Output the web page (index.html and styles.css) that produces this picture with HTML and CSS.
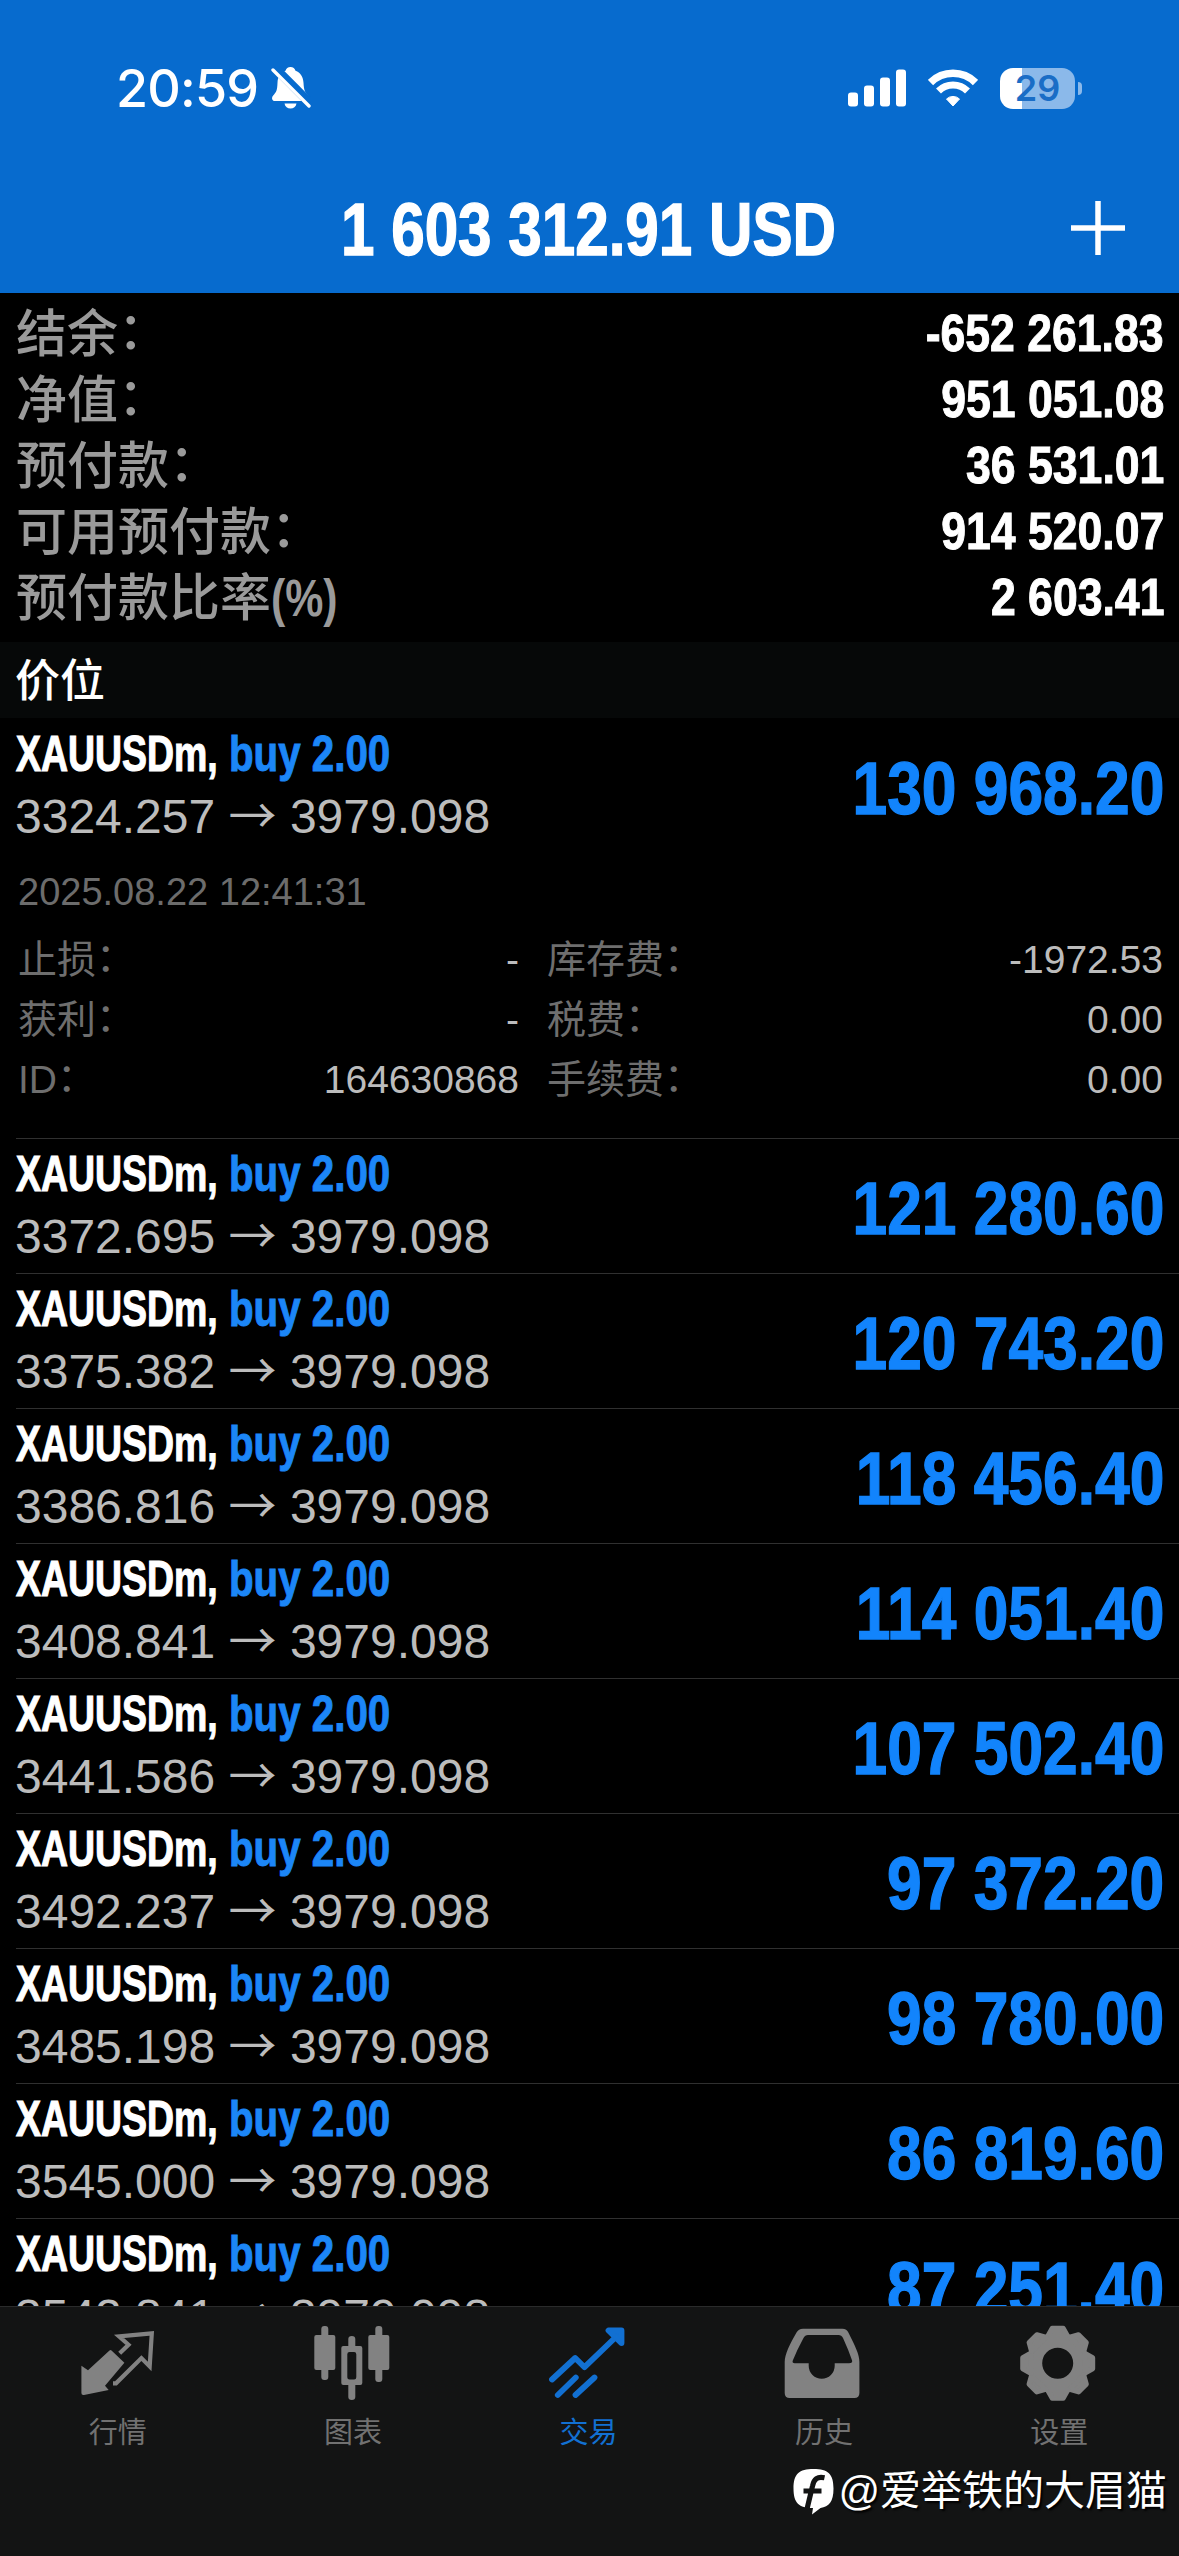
FILE: index.html
```
<!DOCTYPE html>
<html lang="zh-CN">
<head>
<meta charset="utf-8">
<title>交易</title>
<link rel="stylesheet" href="styles.css">
</head>
<body>
<div class="app">
  <header class="header">
    <div class="status">
      <div class="status-left">
        <span class="clock">20:59</span>
        <svg class="bell" width="40" height="44" viewBox="0 0 40 44">
          <path d="M19.500 1c2.600 0 4.400 1.600 5 3.800 5 1.800 7.600 6 8 12 .4 7.400 1.500 9.800 4.400 12.600 1.800 1.800 1.900 5.600-1.400 5.600H4c-3.300 0-3.700-3.600-1.800-5.600 3.200-3.200 4-5.200 4.300-12.600.3-6 3-10.200 8-12 .6-2.200 2.400-3.800 5-3.800z" fill="#fff"/>
          <path d="M13.500 37.500h12c-.6 3.200-3 5-6 5s-5.400-1.800-6-5z" fill="#fff"/>
          <path d="M3 1l36 36" stroke="#076bce" stroke-width="9"/>
          <path d="M2 4l36 36" stroke="#fff" stroke-width="3.400" stroke-linecap="round"/>
        </svg>
      </div>
      <div class="status-right">
        <svg width="58" height="38" viewBox="0 0 58 38" fill="#fff">
          <rect x="0" y="23.500" width="10" height="14" rx="3"/>
          <rect x="16" y="16.500" width="10" height="21" rx="3"/>
          <rect x="32" y="8.500" width="10" height="29" rx="3"/>
          <rect x="48" y="0.500" width="10" height="37" rx="3"/>
        </svg>
        <svg width="50" height="38" viewBox="0 0 50 38" fill="none" stroke="#fff">
          <path d="M2.500 13.500a32 32 0 0 1 45 0" stroke-width="7.500"/>
          <path d="M10.500 22a20.500 20.500 0 0 1 29 0" stroke-width="7"/>
          <path d="M25 37l-6.500-7a9.500 9.500 0 0 1 13 0z" fill="#fff" stroke-width="1"/>
        </svg>
        <div class="battery"><div class="battery-body">29</div><div class="battery-nub"></div></div>
      </div>
    </div>
    <div class="titlebar">
      <h1 class="title">1 603 312.91 USD</h1>
      <svg class="plus" width="56" height="56" viewBox="0 0 56 56"><path d="M28 1v54M1 28h54" stroke="#fff" stroke-width="5.500"/></svg>
    </div>
  </header>

  <section class="summary">
    <div class="sum-row"><span class="sum-label">结余<i>：</i></span><span class="sum-value">-652 261.83</span></div>
    <div class="sum-row"><span class="sum-label">净值<i>：</i></span><span class="sum-value">951 051.08</span></div>
    <div class="sum-row"><span class="sum-label">预付款<i>：</i></span><span class="sum-value">36 531.01</span></div>
    <div class="sum-row"><span class="sum-label">可用预付款<i>：</i></span><span class="sum-value">914 520.07</span></div>
    <div class="sum-row"><span class="sum-label">预付款比率<b class="pct">(%)</b></span><span class="sum-value">2 603.41</span></div>
  </section>

  <h2 class="section">价位</h2>

  <main class="list">
    <article class="position">
      <div class="pos-left"><div class="pos-name"><span class="symbol">XAUUSDm,</span><span class="side">buy 2.00</span></div><div class="pos-price">3324.257 <span class="arrow">→</span> 3979.098</div></div>
      <div class="profit">130 968.20</div>
    </article>
    <div class="details">
      <div class="date">2025.08.22 12:41:31</div>
      <div class="grid">
        <div class="cell"><span class="k">止损<i>：</i></span><span class="v">-</span></div>
        <div class="cell"><span class="k">库存费<i>：</i></span><span class="v">-1972.53</span></div>
        <div class="cell"><span class="k">获利<i>：</i></span><span class="v">-</span></div>
        <div class="cell"><span class="k">税费<i>：</i></span><span class="v">0.00</span></div>
        <div class="cell"><span class="k">ID<i>：</i></span><span class="v">164630868</span></div>
        <div class="cell"><span class="k">手续费<i>：</i></span><span class="v">0.00</span></div>
      </div>
    </div>
    <article class="position">
      <div class="pos-left"><div class="pos-name"><span class="symbol">XAUUSDm,</span><span class="side">buy 2.00</span></div><div class="pos-price">3372.695 <span class="arrow">→</span> 3979.098</div></div>
      <div class="profit">121 280.60</div>
    </article>
    <article class="position">
      <div class="pos-left"><div class="pos-name"><span class="symbol">XAUUSDm,</span><span class="side">buy 2.00</span></div><div class="pos-price">3375.382 <span class="arrow">→</span> 3979.098</div></div>
      <div class="profit">120 743.20</div>
    </article>
    <article class="position">
      <div class="pos-left"><div class="pos-name"><span class="symbol">XAUUSDm,</span><span class="side">buy 2.00</span></div><div class="pos-price">3386.816 <span class="arrow">→</span> 3979.098</div></div>
      <div class="profit">118 456.40</div>
    </article>
    <article class="position">
      <div class="pos-left"><div class="pos-name"><span class="symbol">XAUUSDm,</span><span class="side">buy 2.00</span></div><div class="pos-price">3408.841 <span class="arrow">→</span> 3979.098</div></div>
      <div class="profit">114 051.40</div>
    </article>
    <article class="position">
      <div class="pos-left"><div class="pos-name"><span class="symbol">XAUUSDm,</span><span class="side">buy 2.00</span></div><div class="pos-price">3441.586 <span class="arrow">→</span> 3979.098</div></div>
      <div class="profit">107 502.40</div>
    </article>
    <article class="position">
      <div class="pos-left"><div class="pos-name"><span class="symbol">XAUUSDm,</span><span class="side">buy 2.00</span></div><div class="pos-price">3492.237 <span class="arrow">→</span> 3979.098</div></div>
      <div class="profit">97 372.20</div>
    </article>
    <article class="position">
      <div class="pos-left"><div class="pos-name"><span class="symbol">XAUUSDm,</span><span class="side">buy 2.00</span></div><div class="pos-price">3485.198 <span class="arrow">→</span> 3979.098</div></div>
      <div class="profit">98 780.00</div>
    </article>
    <article class="position">
      <div class="pos-left"><div class="pos-name"><span class="symbol">XAUUSDm,</span><span class="side">buy 2.00</span></div><div class="pos-price">3545.000 <span class="arrow">→</span> 3979.098</div></div>
      <div class="profit">86 819.60</div>
    </article>
    <article class="position">
      <div class="pos-left"><div class="pos-name"><span class="symbol">XAUUSDm,</span><span class="side">buy 2.00</span></div><div class="pos-price">3542.841 <span class="arrow">→</span> 3979.098</div></div>
      <div class="profit">87 251.40</div>
    </article>
  </main>

  <nav class="tabbar">
    <a class="tab">
      <svg width="80" height="80" viewBox="0 0 80 80">
        <path d="M3.400 41.700l6.600 4.600L31.500 26.500q1-1 2 0L46.400 38.700 27 61.700l3.700 4.300L6 71q-2.600.400-2.600-2z" fill="currentColor"/>
        <path d="M41.700 29.200l8.800-8.500-9.500-8.400 32.800-3-2.100 33.200-8.300-8.400L38 59.300h-3" fill="none" stroke="currentColor" stroke-width="4.200"/>
      </svg>
      <span>行情</span>
    </a>
    <a class="tab">
      <svg width="80" height="80" viewBox="0 0 80 80" fill="currentColor">
        <rect x="1.300" y="11" width="21" height="35" rx="2"/><rect x="8.300" y="2" width="7" height="54" rx="3"/>
        <path fill-rule="evenodd" d="M30.300 22h17q2 0 2 2v35q0 2-2 2h-17q-2 0-2-2V24q0-2 2-2zM36.500 28q-2.200 0-2.200 2.200v23q0 2.200 2.200 2.200h4.600q2.200 0 2.200-2.200v-23q0-2.200-2.200-2.200z"/>
        <path d="M35.300 23v-8q0-3 3.500-3t3.500 3v8zM35.300 60v13q0 3 3.500 3t3.500-3V60z"/>
        <rect x="55.300" y="11" width="21" height="35" rx="2"/><rect x="62.300" y="2" width="7" height="56" rx="3"/>
      </svg>
      <span>图表</span>
    </a>
    <a class="tab active">
      <svg width="80" height="80" viewBox="0 0 80 80" fill="none" stroke="currentColor" stroke-width="5.800" stroke-linecap="round">
        <path d="M4 55.500l23.200-21.500 9.300 9.200L71 10" stroke-linejoin="round"/>
        <path d="M60.500 6.500h13v12.600z" fill="currentColor" stroke-linejoin="round"/>
        <path d="M9.800 71l18-17.500M27.500 71l19-17.500"/>
      </svg>
      <span>交易</span>
    </a>
    <a class="tab">
      <svg width="80" height="80" viewBox="0 0 80 80" fill="currentColor">
        <path fill-rule="evenodd" d="M19 4.700h39.500q4.200 0 6 4C71 22 75.400 30 75.400 38v31q0 5-5 5H5.700q-5 0-5-5V38C.7 30 6 20 12.500 8.500q2-3.800 6.500-3.800zM24 11q-3 0-4.500 3-6.500 12-10.700 22.500-1 2.800 2 2.800h13.900v2.400a13 13 0 0 0 26 0v-2.400H65q4 0 3-3-3.500-10.300-9-22.300-1.500-3-4.500-3z"/>
      </svg>
      <span>历史</span>
    </a>
    <a class="tab">
      <svg width="80" height="80" viewBox="0 0 80 80" fill="currentColor">
        <g transform="translate(38.700 39.300)">
          <circle r="23.200" fill="none" stroke="currentColor" stroke-width="15.400"/>
          <g stroke="currentColor" stroke-width="5" stroke-linejoin="round">
            <path id="tooth" d="M-10-27l4.500-8h11l4.500 8z"/>
            <use href="#tooth" transform="rotate(45)"/><use href="#tooth" transform="rotate(90)"/>
            <use href="#tooth" transform="rotate(135)"/><use href="#tooth" transform="rotate(180)"/>
            <use href="#tooth" transform="rotate(225)"/><use href="#tooth" transform="rotate(270)"/>
            <use href="#tooth" transform="rotate(315)"/>
          </g>
        </g>
      </svg>
      <span>设置</span>
    </a>
  </nav>

  <div class="watermark">
    <svg width="42" height="48" viewBox="0 0 42 48">
      <path d="M20.500 1C35 1 40.500 6 40.500 20.500 40.500 34 36 38.500 27.500 40L19 46.500 20 40C6 40 .5 35 .5 20.500S6 1 20.500 1z" fill="#fff"/>
      <path d="M31.500 9.800c-7-1.500-10.500 1-12 8.200L14 41M10.500 23h18" fill="none" stroke="#131414" stroke-width="5.200"/>
    </svg>
    <span class="handle">@爱举铁的大眉猫</span>
  </div>
</div>
</body>
</html>
```
FILE: styles.css
```
* { box-sizing: border-box; }

body {
  margin: 0;
  background: #000;
  color: #fff;
  font-family: "Liberation Sans", "Noto Sans CJK SC", sans-serif;
}

i { font-style: normal; }

.app {
  position: relative;
  display: flex;
  flex-direction: column;
  width: 1179px;
  height: 2556px;
  overflow: hidden;
}

/* header */
.header {
  height: 293px;
  background: #076bce;
}

.status {
  display: flex;
  justify-content: space-between;
  align-items: center;
  height: 176px;
  padding: 0 97px 0 116px;
}

.status-left,
.status-right {
  display: flex;
  align-items: center;
}

.status-left { gap: 13px; }
.status-right { gap: 22px; }

.clock {
  padding-top: 1px;
  font: 500 52px/60px Inter, sans-serif;
  letter-spacing: -0.8px;
}

.battery {
  display: flex;
  align-items: center;
  gap: 3px;
}

.battery-body {
  width: 75px;
  height: 41px;
  border-radius: 13px;
  background: linear-gradient(90deg, #fff 22px, #8bb9ea 22px);
  color: #1a6dc6;
  font: 600 36px/41px Inter, sans-serif;
  text-align: center;
}

.battery-nub {
  width: 4px;
  height: 13px;
  border-radius: 0 4px 4px 0;
  background: #8bb9ea;
}

.titlebar {
  display: grid;
  grid-template-columns: 1fr 56px;
  align-items: center;
  height: 100px;
  padding-right: 53px;
}

.title {
  margin: 0 0 0 107px;
  padding-top: 4px;
  font-size: 74px;
  line-height: 100px;
  text-align: center;
  white-space: nowrap;
  transform: scaleX(0.813);
  -webkit-text-stroke: 1.4px currentColor;
}

/* account summary */
.summary {
  padding: 7px 15px 12px 16px;
}

.sum-row {
  display: flex;
  justify-content: space-between;
  height: 66px;
  line-height: 66px;
}

.sum-label {
  padding-top: 2px;
  color: #9a9a9a;
  font-size: 51px;
  font-weight: 500;
  white-space: nowrap;
}

.sum-label i,
.k i {
  line-height: 0;
  vertical-align: 0.05em;
}

.pct {
  display: inline-block;
  font-weight: 700;
  line-height: 60px;
  transform: scaleX(0.84);
  transform-origin: left;
}

.sum-value {
  font-size: 52px;
  font-weight: 700;
  transform: scaleX(0.857);
  transform-origin: right;
  -webkit-text-stroke: 1px currentColor;
}

.section {
  height: 76px;
  margin: 0;
  padding: 2px 0 0 15px;
  background: #060808;
  font-size: 45px;
  font-weight: 500;
  line-height: 76px;
}

/* positions */
.list {
  flex: 1;
  min-height: 0;
  padding-left: 16px;
  overflow: hidden;
}

.position {
  display: flex;
  justify-content: space-between;
  height: 135px;
  padding-right: 15px;
  border-top: 1px solid #303030;
}

.position:first-child { border-top-color: transparent; }

.pos-name {
  display: flex;
  height: 64px;
  padding-top: 3px;
  font-size: 50px;
  font-weight: 700;
  line-height: 64px;
  white-space: nowrap;
}

.symbol {
  width: 213px;
  transform: scaleX(0.748);
  transform-origin: left;
  -webkit-text-stroke: 1.2px currentColor;
}

.side {
  color: #1c86f7;
  transform: scaleX(0.806);
  transform-origin: left;
  -webkit-text-stroke: 1px currentColor;
}

.pos-price {
  margin-left: -1px;
  color: #bcbcbc;
  font-size: 48px;
  line-height: 67px;
  white-space: nowrap;
}

.arrow { font-family: "Noto Sans CJK SC", sans-serif; line-height: 0; }

.profit {
  padding-top: 3px;
  color: #1284fc;
  font-size: 74px;
  font-weight: 700;
  line-height: 134px;
  transform: scaleX(0.842);
  transform-origin: right;
  -webkit-text-stroke: 1.4px currentColor;
}

.details {
  height: 285px;
  padding: 1px 15px 0 2px;
}

.date {
  color: #6c6c6c;
  font-size: 38px;
  line-height: 76px;
}

.grid {
  display: grid;
  grid-template-columns: 501px 616px;
  column-gap: 28px;
}

.cell {
  display: flex;
  justify-content: space-between;
  height: 60px;
  font-size: 39px;
  line-height: 60px;
}

.k { color: #6e6e6e; }
.v { color: #bcbcbc; }

/* tab bar */
.tabbar {
  display: grid;
  grid-template-columns: repeat(5, 1fr);
  height: 250px;
  padding: 17px 2px 0 0;
  border-top: 1px solid #2a2b2b;
  background: #131414;
}

.tab {
  display: flex;
  flex-direction: column;
  align-items: center;
  color: #828282;
  font-size: 29px;
}

.tab span {
  margin-top: 7px;
  color: #717171;
  line-height: 44px;
}

.tab.active,
.tab.active span { color: #1270d2; }

.watermark {
  position: absolute;
  right: 12px;
  bottom: 33px;
  display: flex;
  align-items: center;
  gap: 3px;
  font-size: 41px;
  line-height: 60px;
  text-shadow: 2px 2px 2px #000;
}

.handle { padding-bottom: 2px; }
```
